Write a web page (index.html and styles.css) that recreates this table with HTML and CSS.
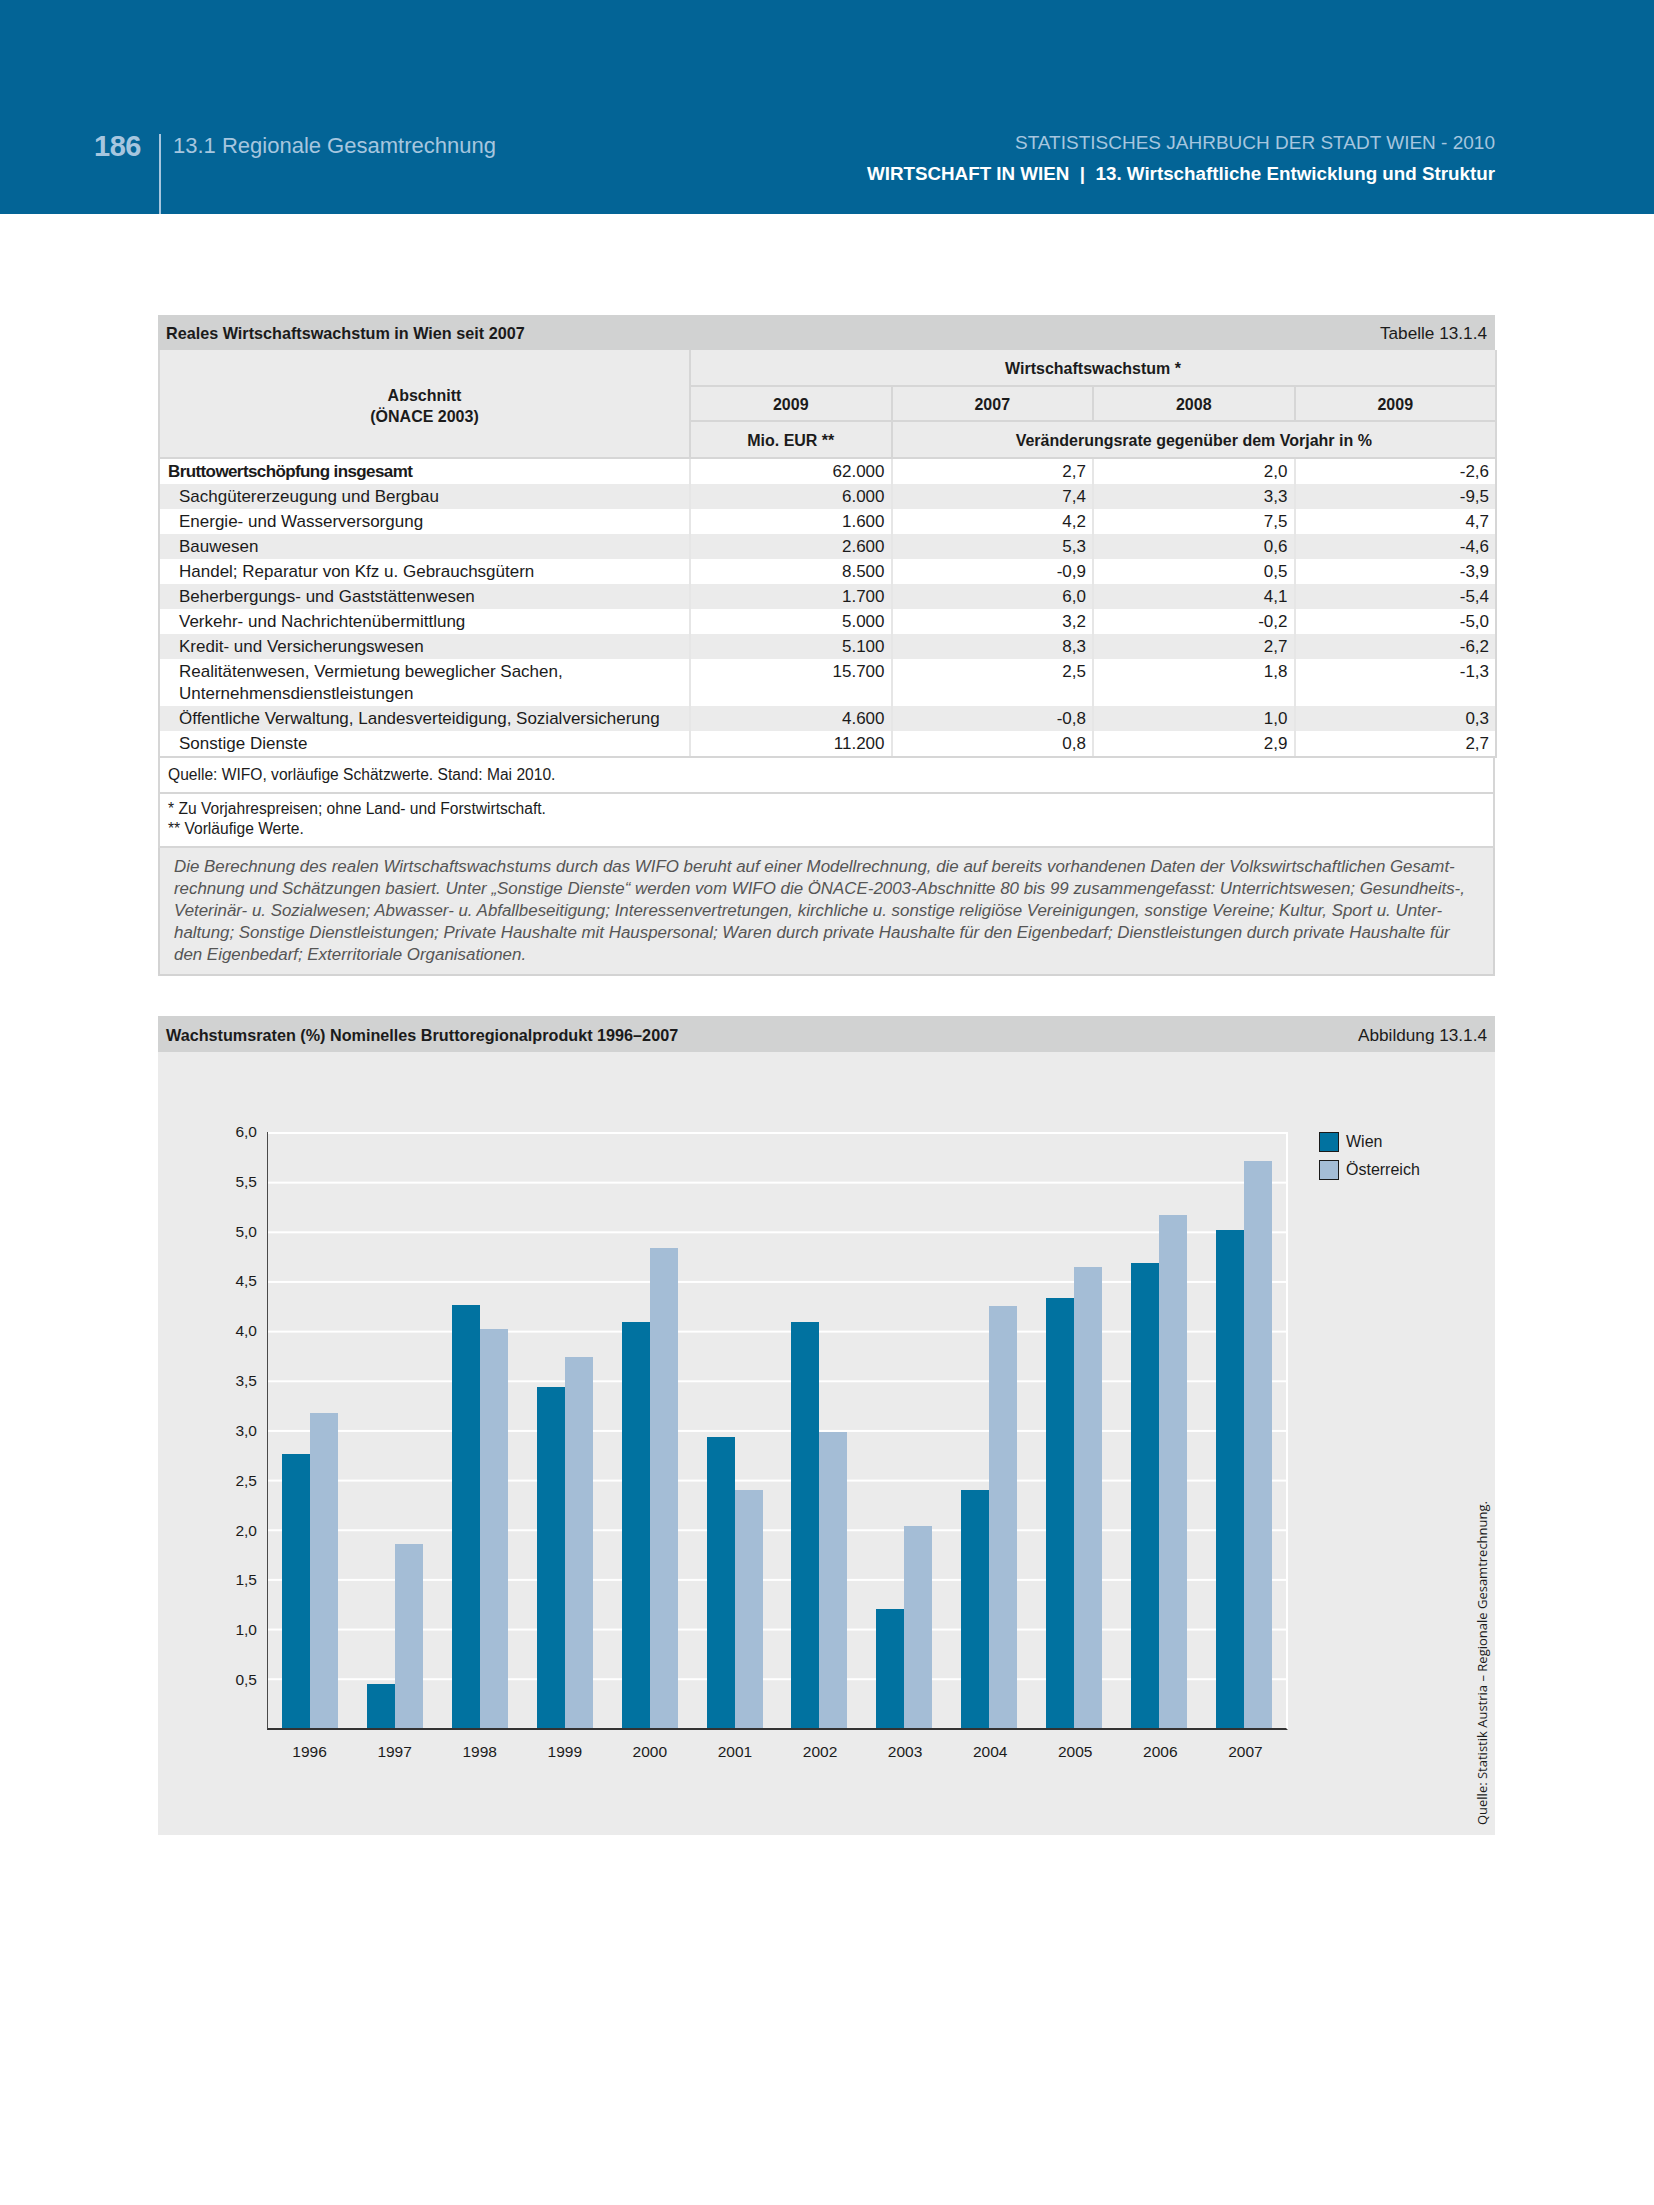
FILE: index.html
```html
<!DOCTYPE html>
<html lang="de">
<head>
<meta charset="utf-8">
<title>Statistisches Jahrbuch der Stadt Wien 2010 – 13.1 Regionale Gesamtrechnung</title>
<link rel="stylesheet" href="styles.css">
</head>
<body>
<header class="page-header">
  <div class="hdr-left">
    <span class="page-num">186</span>
    <span class="section-title">13.1 Regionale Gesamtrechnung</span>
  </div>
  <div class="hdr-right">
    <div class="book-title">STATISTISCHES JAHRBUCH DER STADT WIEN - 2010</div>
    <div class="chapter-title">WIRTSCHAFT IN WIEN &nbsp;|&nbsp; 13. Wirtschaftliche Entwicklung und Struktur</div>
  </div>
</header>

<main class="content">
  <section class="block">
    <div class="block-title">
      <span class="bt-main">Reales Wirtschaftswachstum in Wien seit 2007</span>
      <span class="bt-ref">Tabelle 13.1.4</span>
    </div>
    <table class="data">
      <colgroup>
        <col class="c-label"><col class="c-val"><col class="c-val"><col class="c-val"><col class="c-val">
      </colgroup>
      <thead>
        <tr class="h1">
          <th rowspan="3" class="th-label">Abschnitt<br>(ÖNACE 2003)</th>
          <th colspan="4">Wirtschaftswachstum *</th>
        </tr>
        <tr class="h2">
          <th>2009</th><th>2007</th><th>2008</th><th>2009</th>
        </tr>
        <tr class="h3">
          <th>Mio. EUR **</th>
          <th colspan="3">Veränderungsrate gegenüber dem Vorjahr in %</th>
        </tr>
      </thead>
      <tbody>
        <tr class="total"><td>Bruttowertschöpfung insgesamt</td><td>62.000</td><td>2,7</td><td>2,0</td><td>-2,6</td></tr>
        <tr class="alt"><td>Sachgütererzeugung und Bergbau</td><td>6.000</td><td>7,4</td><td>3,3</td><td>-9,5</td></tr>
        <tr><td>Energie- und Wasserversorgung</td><td>1.600</td><td>4,2</td><td>7,5</td><td>4,7</td></tr>
        <tr class="alt"><td>Bauwesen</td><td>2.600</td><td>5,3</td><td>0,6</td><td>-4,6</td></tr>
        <tr><td>Handel; Reparatur von Kfz u. Gebrauchsgütern</td><td>8.500</td><td>-0,9</td><td>0,5</td><td>-3,9</td></tr>
        <tr class="alt"><td>Beherbergungs- und Gaststättenwesen</td><td>1.700</td><td>6,0</td><td>4,1</td><td>-5,4</td></tr>
        <tr><td>Verkehr- und Nachrichtenübermittlung</td><td>5.000</td><td>3,2</td><td>-0,2</td><td>-5,0</td></tr>
        <tr class="alt"><td>Kredit- und Versicherungswesen</td><td>5.100</td><td>8,3</td><td>2,7</td><td>-6,2</td></tr>
        <tr><td>Realitätenwesen, Vermietung beweglicher Sachen,<br>Unternehmensdienstleistungen</td><td>15.700</td><td>2,5</td><td>1,8</td><td>-1,3</td></tr>
        <tr class="alt"><td>Öffentliche Verwaltung, Landesverteidigung, Sozialversicherung</td><td>4.600</td><td>-0,8</td><td>1,0</td><td>0,3</td></tr>
        <tr><td>Sonstige Dienste</td><td>11.200</td><td>0,8</td><td>2,9</td><td>2,7</td></tr>
      </tbody>
    </table>
    <div class="source-row">Quelle: WIFO, vorläufige Schätzwerte. Stand: Mai 2010.</div>
    <div class="notes-row">
      <div>* Zu Vorjahrespreisen; ohne Land- und Forstwirtschaft.</div>
      <div>** Vorläufige Werte.</div>
    </div>
    <div class="remark">
      Die Berechnung des realen Wirtschaftswachstums durch das WIFO beruht auf einer Modellrechnung, die auf bereits vorhandenen Daten der Volkswirtschaftlichen Gesamt-<br>
      rechnung und Schätzungen basiert. Unter „Sonstige Dienste“ werden vom WIFO die ÖNACE-2003-Abschnitte 80 bis 99 zusammengefasst: Unterrichtswesen; Gesundheits-,<br>
      Veterinär- u. Sozialwesen; Abwasser- u. Abfallbeseitigung; Interessenvertretungen, kirchliche u. sonstige religiöse Vereinigungen, sonstige Vereine; Kultur, Sport u. Unter-<br>
      haltung; Sonstige Dienstleistungen; Private Haushalte mit Hauspersonal; Waren durch private Haushalte für den Eigenbedarf; Dienstleistungen durch private Haushalte für<br>
      den Eigenbedarf; Exterritoriale Organisationen.
    </div>
  </section>

  <section class="block chart-block">
    <div class="block-title">
      <span class="bt-main">Wachstumsraten (%) Nominelles Bruttoregionalprodukt 1996–2007</span>
      <span class="bt-ref">Abbildung 13.1.4</span>
    </div>
    <div class="chart-body">
      <div class="yaxis">
        <span>6,0</span><span>5,5</span><span>5,0</span><span>4,5</span><span>4,0</span><span>3,5</span>
        <span>3,0</span><span>2,5</span><span>2,0</span><span>1,5</span><span>1,0</span><span>0,5</span>
      </div>
      <div class="plot-col">
        <div class="plot">
          <div class="grp"><i class="bar w" style="height:45.9%"></i><i class="bar o" style="height:52.8%"></i></div>
          <div class="grp"><i class="bar w" style="height:7.4%"></i><i class="bar o" style="height:30.9%"></i></div>
          <div class="grp"><i class="bar w" style="height:70.9%"></i><i class="bar o" style="height:66.9%"></i></div>
          <div class="grp"><i class="bar w" style="height:57.2%"></i><i class="bar o" style="height:62.2%"></i></div>
          <div class="grp"><i class="bar w" style="height:68.2%"></i><i class="bar o" style="height:80.5%"></i></div>
          <div class="grp"><i class="bar w" style="height:48.9%"></i><i class="bar o" style="height:39.9%"></i></div>
          <div class="grp"><i class="bar w" style="height:68.2%"></i><i class="bar o" style="height:49.7%"></i></div>
          <div class="grp"><i class="bar w" style="height:20.0%"></i><i class="bar o" style="height:33.9%"></i></div>
          <div class="grp"><i class="bar w" style="height:40.0%"></i><i class="bar o" style="height:70.8%"></i></div>
          <div class="grp"><i class="bar w" style="height:72.1%"></i><i class="bar o" style="height:77.3%"></i></div>
          <div class="grp"><i class="bar w" style="height:78.0%"></i><i class="bar o" style="height:86.0%"></i></div>
          <div class="grp"><i class="bar w" style="height:83.6%"></i><i class="bar o" style="height:95.2%"></i></div>
        </div>
        <div class="xaxis">
          <span>1996</span><span>1997</span><span>1998</span><span>1999</span><span>2000</span><span>2001</span>
          <span>2002</span><span>2003</span><span>2004</span><span>2005</span><span>2006</span><span>2007</span>
        </div>
      </div>
      <div class="legend">
        <div class="lg-item"><span class="sw w"></span>Wien</div>
        <div class="lg-item"><span class="sw o"></span>Österreich</div>
      </div>
      <div class="chart-source">Quelle: Statistik Austria – Regionale Gesamtrechnung.</div>
    </div>
  </section>
</main>
</body>
</html>
```

FILE: styles.css
```css
html, body {
  margin: 0;
  padding: 0;
  background: #ffffff;
}

body {
  font-family: "Liberation Sans", Arial, sans-serif;
  color: #1b1b1b;
  width: 1654px;
  min-height: 2205px;
}

/* ---------- page header ---------- */
.page-header {
  height: 214px;
  background: #036496;
  display: flex;
  justify-content: space-between;
  padding: 0 159px 0 93px;
  box-sizing: border-box;
}

.hdr-left {
  display: flex;
  align-items: flex-start;
  padding-top: 130px;
}

.page-num {
  font-weight: bold;
  font-size: 29px;
  line-height: 32px;
  color: #a6c6df;
  width: 66px;
  box-sizing: border-box;
  padding-right: 18px;
  text-align: right;
  letter-spacing: -0.5px;
}

.section-title {
  align-self: stretch;
  border-left: 2px solid #a6c6df;
  margin-top: 4px;
  padding-left: 12px;
  font-size: 22px;
  line-height: 24px;
  color: #a6c6df;
}

.hdr-right {
  padding-top: 129px;
  text-align: right;
}

.book-title {
  font-size: 19px;
  line-height: 28px;
  color: #a6c6df;
}

.chapter-title {
  font-weight: bold;
  font-size: 18.8px;
  line-height: 34px;
  color: #ffffff;
}

/* ---------- content ---------- */
.content {
  padding-left: 158px;
  padding-top: 101px;
}

.block {
  width: 1337px;
}

.chart-block {
  margin-top: 40px;
}

.block-title {
  display: flex;
  justify-content: space-between;
  align-items: center;
  height: 35px;
  padding: 2px 8px 0 8px;
  box-sizing: border-box;
  background: #d1d2d2;
  font-size: 16.2px;
}

.chart-block .block-title {
  height: 36px;
}

.bt-main {
  font-weight: bold;
}

.bt-ref {
  font-size: 17.2px;
}

/* ---------- table ---------- */
.data {
  width: 1337px;
  table-layout: fixed;
  border-collapse: collapse;
  font-size: 17px;
}

.c-label { width: 531px; }
.c-val { width: 201.5px; }

.data thead th {
  background: #ebebeb;
  font-size: 16px;
  font-weight: bold;
  border: 2px solid #d6d6d6;
  padding: 3px 0 0 0;
  text-align: center;
  line-height: 20px;
}

.data thead th.th-label {
  border-left: 2px solid #d6d6d6;
  line-height: 21px;
  padding-top: 4px;
}

.data thead tr.h1 th { height: 32px; border-top: none; }
.data thead tr.h2 th { height: 30px; }
.data thead tr.h3 th { height: 32px; }

.data tbody td {
  padding: 2px 6px 1px 6px;
  line-height: 22px;
  height: 22px;
  text-align: right;
  vertical-align: top;
  border-left: 2px solid #e6e6e6;
  border-right: 2px solid #e6e6e6;
}

.data tbody td:first-child {
  text-align: left;
  padding-left: 19px;
  border-left: 2px solid #d6d6d6;
}

.data tbody td:last-child {
  border-right: 2px solid #d6d6d6;
}

.data tbody tr.alt td {
  background: #ebebeb;
}

.data tbody tr.total td:first-child {
  font-weight: bold;
  padding-left: 8px;
  letter-spacing: -0.6px;
}

.data tbody tr:last-child td {
  border-bottom: 2px solid #d6d6d6;
}

.source-row {
  height: 34px;
  line-height: 33px;
  padding-left: 8px;
  font-size: 15.6px;
  border: 2px solid #d6d6d6;
  border-top: none;
}

.notes-row {
  padding: 5px 8px 7px 8px;
  font-size: 15.6px;
  line-height: 20px;
  border: 2px solid #d6d6d6;
  border-top: none;
}

.remark {
  background: #ebebeb;
  border: 2px solid #d3d3d3;
  border-top: none;
  padding: 8px 8px 8px 14px;
  font-style: italic;
  font-size: 16.9px;
  line-height: 22px;
  color: #555555;
  white-space: nowrap;
}

/* ---------- chart ---------- */
.chart-body {
  background: #ebebeb;
  height: 783px;
  display: flex;
  align-items: flex-start;
  padding-top: 80px;
  box-sizing: border-box;
}

.yaxis {
  width: 99px;
  margin-right: 10px;
  height: 598px;
  display: grid;
  grid-template-rows: repeat(12, 1fr);
  text-align: right;
  font-size: 15.5px;
  line-height: 20px;
}

.yaxis span {
  transform: translateY(-10px);
}

.plot-col {
  width: 1021px;
}

.plot {
  height: 598px;
  display: flex;
  align-items: flex-end;
  border-left: 1px solid #4a4a4a;
  border-right: 2px solid #ffffff;
  border-bottom: 2px solid #333333;
  box-sizing: border-box;
  background-image: linear-gradient(#ffffff 0, #ffffff 2px, transparent 2px);
  background-size: 100% 49.67px;
  background-repeat: repeat-y;
}

.grp {
  flex: 1;
  height: 100%;
  display: flex;
  align-items: flex-end;
  justify-content: center;
}

.bar {
  display: block;
  width: 28px;
}

.bar.w { background: #0172a0; }
.bar.o { background: #a4bdd6; }

.xaxis {
  display: flex;
  margin-top: 12px;
  font-size: 15.5px;
  line-height: 20px;
}

.xaxis span {
  flex: 1;
  text-align: center;
}

.legend {
  margin-left: 31px;
  font-size: 16px;
  line-height: 20px;
}

.lg-item {
  display: flex;
  align-items: center;
  height: 20px;
  margin-bottom: 8px;
}

.sw {
  width: 18px;
  height: 18px;
  border: 1px solid #1a1a1a;
  margin-right: 7px;
}

.sw.w { background: #0172a0; }
.sw.o { background: #a4bdd6; }

.chart-source {
  align-self: flex-end;
  margin-left: auto;
  margin-right: 5px;
  margin-bottom: 10px;
  writing-mode: vertical-rl;
  transform: rotate(180deg);
  font-family: "Open Sans", "Liberation Sans", sans-serif;
  font-size: 13px;
  line-height: 16px;
  color: #1b1b1b;
}
```
